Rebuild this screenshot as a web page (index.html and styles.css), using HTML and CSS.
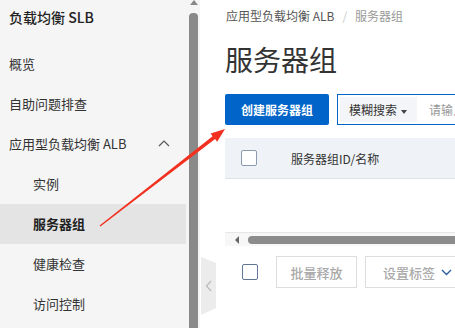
FILE: index.html
```html
<!DOCTYPE html>
<html lang="zh-CN">
<head>
    <meta charset="UTF-8">
    <title>服务器组</title>
    <link rel="stylesheet" href="styles.css">
</head>
<body>
    <div class="page">
        <div class="sidebar">
            <div class="side-title">负载均衡 SLB</div>
            <div class="nav-item">概览</div>
            <div class="nav-item">自助问题排查</div>
            <div class="nav-item nav-group">
                <span>应用型负载均衡 ALB</span>
                <svg class="up" width="12" height="7" viewBox="0 0 12 7"><polyline points="1,6 6,1 11,6" fill="none" stroke="#555" stroke-width="1.2"/></svg>
            </div>
            <div class="nav-item sub">实例</div>
            <div class="nav-item sub active">服务器组</div>
            <div class="nav-item sub">健康检查</div>
            <div class="nav-item sub">访问控制</div>
        </div>
        <div class="vscroll">
            <div class="vscroll-arrow"></div>
            <div class="vscroll-thumb"></div>
        </div>
        <div class="main">
            <div class="crumb"><span>应用型负载均衡 ALB</span><span class="sep">/</span><span class="cur">服务器组</span></div>
            <h1 class="title">服务器组</h1>
            <div class="toolbar">
                <button class="btn-primary">创建服务器组</button>
                <div class="search">
                    <div class="search-type">模糊搜索<span class="caret"></span></div>
                    <div class="search-ph">请输入</div>
                </div>
            </div>
            <div class="thead">
                <span class="check"></span>
                <span class="th">服务器组ID/名称</span>
            </div>
            <div class="tbody"></div>
            <div class="hscroll">
                <div class="hscroll-arrow"></div>
                <div class="hscroll-thumb"></div>
            </div>
            <div class="footer">
                <span class="check dark"></span>
                <button class="btn">批量释放</button>
                <button class="btn btn-tag">设置标签
                    <svg width="11" height="7" viewBox="0 0 11 7"><polyline points="1,1 5.5,5.5 10,1" fill="none" stroke="#2a5fa0" stroke-width="1.4"/></svg>
                </button>
            </div>
        </div>
    </div>

    <div class="collapse-tab">
        <svg width="8" height="12" viewBox="0 0 8 12"><polyline points="6,1 1.5,6 6,11" fill="none" stroke="#bbb" stroke-width="1.3"/></svg>
    </div>

    <svg class="arrow" width="455" height="328" viewBox="0 0 455 328">
        <polygon points="99.6,225.5 212.6,136.2 210.6,133.5 225,129 217.2,141.8 215.1,139.1 100.4,226.5" fill="#f2301f"/>
    </svg>
</body>
</html>
```

FILE: styles.css
```css
* {
    margin: 0;
    padding: 0;
    box-sizing: border-box;
}

body {
    width: 455px;
    height: 328px;
    overflow: hidden;
    background: #fff;
    color: #333;
    font-family: "Noto Sans CJK SC", "Noto Sans", sans-serif;
    position: relative;
}

.page {
    display: flex;
    height: 328px;
}

.sidebar {
    width: 186px;
    flex: none;
    background: #f5f5f5;
}

.side-title {
    height: 34px;
    line-height: 34px;
    padding-left: 9px;
    font-size: 14px;
    font-weight: 500;
    color: #222;
    margin-bottom: 10px;
}

.nav-item {
    height: 40px;
    line-height: 40px;
    padding-left: 9px;
    font-size: 13px;
    color: #333;
}

.nav-group {
    display: flex;
    align-items: center;
    justify-content: space-between;
    padding-right: 16px;
}

.nav-group .up {
    margin-top: -2px;
}

.nav-item.sub {
    padding-left: 33px;
}

.nav-item.active {
    background: #e4e4e4;
    font-weight: bold;
    color: #222;
}

.vscroll {
    width: 14px;
    flex: none;
    background: #f5f5f5;
    display: flex;
    flex-direction: column;
    align-items: center;
    padding-left: 1px;
}

.vscroll-arrow {
    width: 0;
    height: 0;
    border-left: 4px solid transparent;
    border-right: 4px solid transparent;
    border-bottom: 5px solid #888;
}

.vscroll-thumb {
    width: 9px;
    flex: 1;
    margin-top: 8px;
    background: #898989;
    border-radius: 4px 4px 0 0;
}

.main {
    flex: 1;
    padding-left: 25px;
    min-width: 0;
}

.crumb {
    height: 30px;
    line-height: 31px;
    padding-left: 1px;
    font-size: 12px;
    color: #555;
    white-space: nowrap;
}

.crumb .sep {
    color: #ccc;
    margin: 0 8px;
}

.crumb .cur {
    color: #999;
}

.title {
    height: 40px;
    line-height: 40px;
    margin-top: 9px;
    font-size: 28px;
    font-weight: normal;
    color: #333;
}

.toolbar {
    display: flex;
    height: 31px;
    margin-top: 15px;
}

.btn-primary {
    width: 104px;
    flex: none;
    border: none;
    background: #0064c8;
    color: #fff;
    font-family: inherit;
    font-size: 12px;
    font-weight: bold;
    border-radius: 2px;
}

.search {
    flex: 1;
    margin-left: 8px;
    border: 1px solid #0064c8;
    border-right: none;
    display: flex;
    padding: 2px;
    white-space: nowrap;
    overflow: hidden;
}

.search-type {
    width: 77px;
    flex: none;
    background: #f3f5f8;
    font-size: 12px;
    line-height: 25px;
    padding-left: 9px;
    color: #333;
}

.caret {
    display: inline-block;
    width: 0;
    height: 0;
    border-left: 3px solid transparent;
    border-right: 3px solid transparent;
    border-top: 4px solid #444;
    margin-left: 4px;
    vertical-align: middle;
}

.search-ph {
    padding-left: 12px;
    font-size: 12px;
    line-height: 25px;
    color: #999;
}

.thead {
    height: 41px;
    margin-top: 13px;
    background: #eff2f6;
    border-bottom: 1px solid #dfe2e6;
    display: flex;
    align-items: center;
    padding-left: 16px;
}

.check {
    width: 16px;
    height: 16px;
    flex: none;
    border: 1px solid #8c9bb0;
    border-radius: 2px;
    background: #fff;
}

.check.dark {
    border-color: #5e7596;
}

.th {
    margin-left: 34px;
    font-size: 12px;
    color: #333;
}

.tbody {
    height: 53px;
}

.hscroll {
    height: 14px;
    border-top: 1px solid #e6e6e6;
    background: #f7f7f7;
    display: flex;
    align-items: center;
    padding-left: 10px;
}

.hscroll-arrow {
    width: 0;
    height: 0;
    border-top: 4px solid transparent;
    border-bottom: 4px solid transparent;
    border-right: 4px solid #666;
}

.hscroll-thumb {
    flex: 1;
    height: 8px;
    margin-left: 9px;
    background: #8c8c8c;
    border-radius: 4px 0 0 4px;
}

.footer {
    display: flex;
    align-items: center;
    height: 32px;
    margin-top: 10px;
    padding-left: 17px;
}

.btn {
    height: 32px;
    width: 81px;
    flex: none;
    margin-left: 18px;
    border: 1px solid #ddd;
    background: #fff;
    color: #aaa;
    font-family: inherit;
    font-size: 13px;
    font-weight: 500;
}

.btn-tag {
    width: 110px;
    margin-left: 8px;
    text-align: left;
    padding-left: 17px;
    display: flex;
    align-items: center;
    gap: 6px;
}

.collapse-tab {
    position: absolute;
    left: 201px;
    top: 257px;
    width: 15px;
    height: 58px;
    background: #ececec;
    clip-path: polygon(0 0, 100% 6px, 100% calc(100% - 7px), 0 100%);
    display: flex;
    align-items: center;
    justify-content: center;
}

.arrow {
    position: absolute;
    left: 0;
    top: 0;
    pointer-events: none;
}
```
